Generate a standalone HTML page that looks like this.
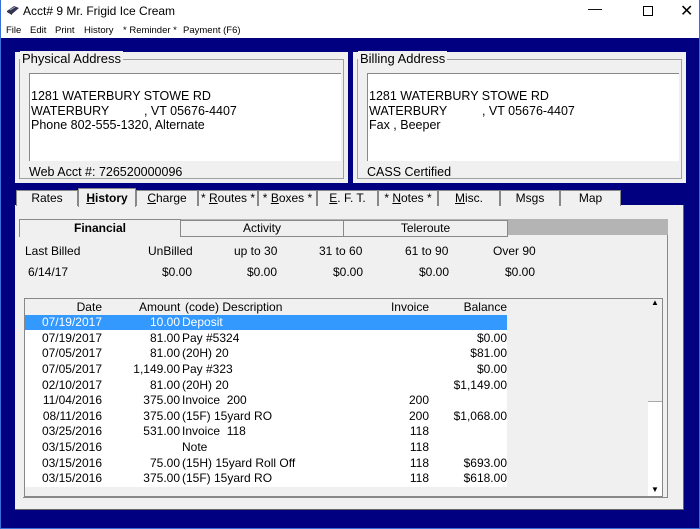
<!DOCTYPE html><html><head><style>
body{margin:0;width:700px;height:529px;overflow:hidden;font-family:"Liberation Sans",Arial,sans-serif;font-size:12px;color:#000;background:#000080;position:relative}
.a{position:absolute}
.t{white-space:nowrap}
.tb{position:absolute;top:190px;height:15px;background:#f0f0f0;border:1px solid #888;border-bottom:none;text-align:center;line-height:15px}
</style></head><body>
<div class="a" style="left:0;top:0;width:700px;height:38px;background:#fff"></div>
<div class="a" style="left:0;top:0;width:1px;height:529px;background:#3a6ed8"></div>
<div class="a" style="left:699px;top:0;width:1px;height:529px;background:#3a6ed8"></div>
<div class="a" style="left:0;top:528px;width:700px;height:1px;background:#3a6ed8"></div>
<svg class="a" style="left:6px;top:4px" width="14" height="12"><path d="M1 7 L8 2 L13 4 L6 10 Z" fill="#335" /><path d="M1 7 L6 10 L6 11 L1 8Z" fill="#112"/><path d="M4 6 L9 3" stroke="#aac" /></svg>
<div class="a t" style="left:23px;top:4px;font-size:12px">Acct# 9 Mr. Frigid Ice Cream</div>
<div class="a t" style="left:588px;top:0;font-size:14px">—</div>
<div class="a" style="left:643px;top:6px;width:8px;height:8px;border:1px solid #000"></div>
<div class="a t" style="left:680px;top:1px;font-size:16px">✕</div>
<div class="a t" style="left:6px;top:25px;font-size:9.5px">File</div>
<div class="a t" style="left:30px;top:25px;font-size:9.5px">Edit</div>
<div class="a t" style="left:55px;top:25px;font-size:9.5px">Print</div>
<div class="a t" style="left:84px;top:25px;font-size:9.5px">History</div>
<div class="a t" style="left:123px;top:25px;font-size:9.5px">* Reminder *</div>
<div class="a t" style="left:183px;top:25px;font-size:9.5px">Payment (F6)</div>

<div class="a" style="left:15px;top:52px;width:333px;height:131px;background:#f0f0f0"></div>
<div class="a" style="left:19px;top:59px;width:325px;height:120px;border:1px solid #a0a0a0;box-sizing:border-box"></div>
<div class="a t" style="left:20px;top:51px;background:#f0f0f0;padding:0 2px;font-size:13px">Physical Address</div>
<div class="a" style="left:29px;top:73px;width:311px;height:87px;background:#fff;border-top:1px solid #888;border-left:1px solid #888"></div>
<div class="a t" style="left:31px;top:89px;font-size:12.5px;line-height:14.5px">1281 WATERBURY STOWE RD<br>WATERBURY&nbsp;&nbsp;&nbsp;&nbsp;&nbsp;&nbsp;&nbsp;&nbsp;&nbsp;&nbsp;, VT 05676-4407<br>Phone 802-555-1320, Alternate</div>
<div class="a t" style="left:29px;top:165px;font-size:12.5px">Web Acct #: 726520000096</div>

<div class="a" style="left:353px;top:52px;width:333px;height:131px;background:#f0f0f0"></div>
<div class="a" style="left:357px;top:59px;width:325px;height:120px;border:1px solid #a0a0a0;box-sizing:border-box"></div>
<div class="a t" style="left:358px;top:51px;background:#f0f0f0;padding:0 2px;font-size:13px">Billing Address</div>
<div class="a" style="left:367px;top:73px;width:311px;height:87px;background:#fff;border-top:1px solid #888;border-left:1px solid #888"></div>
<div class="a t" style="left:369px;top:89px;font-size:12.5px;line-height:14.5px">1281 WATERBURY STOWE RD<br>WATERBURY&nbsp;&nbsp;&nbsp;&nbsp;&nbsp;&nbsp;&nbsp;&nbsp;&nbsp;&nbsp;, VT 05676-4407<br>Fax , Beeper</div>
<div class="a t" style="left:367px;top:165px;font-size:12.5px">CASS Certified</div>

<div class="a" style="left:15px;top:205px;width:669px;height:305px;background:#f0f0f0;border-right:1px solid #666;border-bottom:1px solid #666;box-sizing:border-box"></div>
<div class="tb" style="left:16px;width:60px">Rates</div>
<div class="tb" style="left:78px;top:188px;width:56px;height:18px;line-height:19px;font-weight:bold"><u>H</u>istory</div>
<div class="tb" style="left:136px;width:60px"><u>C</u>harge</div>
<div class="tb" style="left:198px;width:58px">* <u>R</u>outes *</div>
<div class="tb" style="left:258px;width:57px">* <u>B</u>oxes *</div>
<div class="tb" style="left:317px;width:59px"><u>E</u>. F. T.</div>
<div class="tb" style="left:378px;width:58px">* <u>N</u>otes *</div>
<div class="tb" style="left:438px;width:60px"><u>M</u>isc.</div>
<div class="tb" style="left:500px;width:58px">Msgs</div>
<div class="tb" style="left:560px;width:59px">Map</div>

<div class="a" style="left:23px;top:219px;width:645px;height:17px;background:#b4b4b4"></div>
<div class="a" style="left:23px;top:235px;width:645px;height:263px;background:#f0f0f0;border-right:1px solid #888;border-bottom:1px solid #888;box-sizing:border-box"></div>
<div class="a" style="left:19px;top:219px;width:160px;height:17px;background:#f0f0f0;border:1px solid #888;border-bottom:none;text-align:center;line-height:17px;font-weight:bold">Financial</div>
<div class="a" style="left:180px;top:220px;width:162px;height:15px;background:#f0f0f0;border:1px solid #888;text-align:center;line-height:15px">Activity</div>
<div class="a" style="left:343px;top:220px;width:163px;height:15px;background:#f0f0f0;border:1px solid #888;text-align:center;line-height:15px">Teleroute</div>

<div class="a t" style="left:25px;top:244px">Last Billed</div>
<div class="a t" style="left:148px;top:244px">UnBilled</div>
<div class="a t" style="left:234px;top:244px">up to 30</div>
<div class="a t" style="left:319px;top:244px">31 to 60</div>
<div class="a t" style="left:405px;top:244px">61 to 90</div>
<div class="a t" style="left:493px;top:244px">Over 90</div>
<div class="a t" style="left:28px;top:265px">6/14/17</div>
<div class="a t" style="left:162px;top:265px">$0.00</div>
<div class="a t" style="left:247px;top:265px">$0.00</div>
<div class="a t" style="left:333px;top:265px">$0.00</div>
<div class="a t" style="left:419px;top:265px">$0.00</div>
<div class="a t" style="left:505px;top:265px">$0.00</div>

<div class="a" style="left:24px;top:298px;width:639px;height:199px;border:1px solid #888;box-sizing:border-box;background:#f0f0f0"></div>
<div class="a" style="left:25px;top:315px;width:482px;height:172px;background:#fff"></div>
<div class="a" style="left:648px;top:299px;width:14px;height:197px;background:#fff"></div>
<div class="a" style="left:648px;top:299px;width:14px;height:103px;background:#f0f0f0;border-bottom:1px solid #aaa;box-sizing:border-box"></div>
<div class="a t" style="left:651px;top:298px;font-size:8px">▲</div>
<div class="a t" style="left:651px;top:485px;font-size:8px">▼</div>
<div class="a" style="left:25px;top:315px;width:482px;height:15px;background:#3399ff"></div>
<div class="a" style="left:25px;top:300px;width:482px;font-size:12px;line-height:15.6px">
<div style="position:relative;height:15px"><span class="a" style="right:405px">Date</span><span class="a" style="left:114px">Amount</span><span class="a" style="left:160px">(code) Description</span><span class="a" style="right:78px">Invoice</span><span class="a" style="right:0">Balance</span></div>
</div>
<div class="a" style="left:25px;top:315px;width:482px;font-size:12px;line-height:15.65px">
<style>.r{position:relative;height:15.65px}.r span{position:absolute}.d{right:405px}.m{right:327px}.s{left:157px}.i{right:78px}.b{right:0}</style>
<div class="r" style="color:#fff"><span class="d">07/19/2017</span><span class="m">10.00</span><span class="s">Deposit</span></div>
<div class="r"><span class="d">07/19/2017</span><span class="m">81.00</span><span class="s">Pay #5324</span><span class="b">$0.00</span></div>
<div class="r"><span class="d">07/05/2017</span><span class="m">81.00</span><span class="s">(20H) 20</span><span class="b">$81.00</span></div>
<div class="r"><span class="d">07/05/2017</span><span class="m">1,149.00</span><span class="s">Pay #323</span><span class="b">$0.00</span></div>
<div class="r"><span class="d">02/10/2017</span><span class="m">81.00</span><span class="s">(20H) 20</span><span class="b">$1,149.00</span></div>
<div class="r"><span class="d">11/04/2016</span><span class="m">375.00</span><span class="s">Invoice&nbsp; 200</span><span class="i">200</span></div>
<div class="r"><span class="d">08/11/2016</span><span class="m">375.00</span><span class="s">(15F) 15yard RO</span><span class="i">200</span><span class="b">$1,068.00</span></div>
<div class="r"><span class="d">03/25/2016</span><span class="m">531.00</span><span class="s">Invoice&nbsp; 118</span><span class="i">118</span></div>
<div class="r"><span class="d">03/15/2016</span><span class="s">Note</span><span class="i">118</span></div>
<div class="r"><span class="d">03/15/2016</span><span class="m">75.00</span><span class="s">(15H) 15yard Roll Off</span><span class="i">118</span><span class="b">$693.00</span></div>
<div class="r"><span class="d">03/15/2016</span><span class="m">375.00</span><span class="s">(15F) 15yard RO</span><span class="i">118</span><span class="b">$618.00</span></div>
</div>
</body></html>
